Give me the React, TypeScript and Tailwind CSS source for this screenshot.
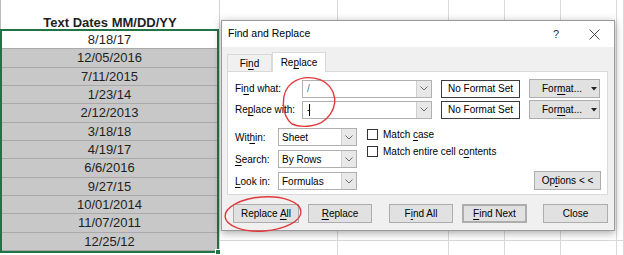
import React from "react";

const U = ({ children }: { children: React.ReactNode }) => (
  <span className="underline decoration-[0.5px] underline-offset-[1.5px]">{children}</span>
);

const Chev = () => (
  <svg width="8" height="5" viewBox="0 0 8 5">
    <path d="M0.5 0.5 L4 4 L7.5 0.5" fill="none" stroke="#6b6b6b" strokeWidth="1" />
  </svg>
);

function Combo({ className, text }: { className: string; text: React.ReactNode }) {
  return (
    <div className={`flex h-[18px] border border-[#b0b0b0] bg-white ${className}`}>
      <div className="flex flex-1 items-center pl-[3px] overflow-hidden whitespace-nowrap">{text}</div>
      <div className="flex w-[15px] items-center justify-center border-l border-[#cfcfcf] bg-[#e8e8e8]">
        <Chev />
      </div>
    </div>
  );
}

function Btn({ className, children }: { className: string; children: React.ReactNode }) {
  return (
    <div className={`flex h-[19px] items-center justify-center border border-[#adadad] bg-[#e1e1e1] ${className}`}>
      {children}
    </div>
  );
}

const dates = [
  "8/18/17",
  "12/05/2016",
  "7/11/2015",
  "1/23/14",
  "2/12/2013",
  "3/18/18",
  "4/19/17",
  "6/6/2016",
  "9/27/15",
  "10/01/2014",
  "11/07/2011",
  "12/25/12",
];

export default function App() {
  return (
    <div className="relative h-[255px] w-[624px] overflow-hidden bg-white" style={{ fontFamily: "'Liberation Sans', Arial, sans-serif" }}>
      {/* Sheet */}
      <div className="flex h-full">
        {/* Column A */}
        <div className="flex h-full w-[220px] flex-col border-r border-[#d4d4d4] text-[13px] text-[#1f1f1f]">
          <div className="h-[29px] border-l border-[#bdbdbd] pt-[17px] text-center font-bold leading-[12px]">Text Dates MM/DD/YY</div>
          <div className="relative border-2 border-[#217346]">
            {dates.map((d, i) => (
              <div
                key={d}
                className={`flex h-[18.33px] items-center justify-center border-b border-[#a9a9a9] last:border-b-0 ${i === 0 ? "bg-white" : "bg-[#c8c8c8]"}`}
              >
                {d}
              </div>
            ))}
            <div className="absolute bottom-[-4px] right-[-4px] h-[6px] w-[6px] border border-white bg-[#217346]" />
          </div>
        </div>
        {/* Other columns */}
        <div className="grid h-full flex-1 grid-cols-[118px_111px_56px_56px_56px_1fr] grid-rows-[241px_1fr]">
          {Array.from({ length: 12 }).map((_, i) => (
            <div key={i} className={`border-r border-[#d9d9d9] ${i < 6 ? "border-b" : ""}`} />
          ))}
        </div>
      </div>

      {/* Dialog */}
      <div className="absolute left-[221px] top-[20px] flex h-[211px] w-[394px] flex-col border border-[#9a9a9a] bg-[#f0f0f0] text-[10px] text-black shadow-[0_2px_8px_rgba(0,0,0,0.35)]">
        <div className="flex h-[26px] items-center bg-white pl-[6px]">
          <div className="flex-1 text-[10.5px]">Find and Replace</div>
          <div className="text-[11px] text-[#333]">?</div>
          <svg width="11" height="11" viewBox="0 0 11 11" className="ml-[30px] mr-[14px]">
            <path d="M0.5 0.5 L10.5 10.5 M10.5 0.5 L0.5 10.5" stroke="#333" strokeWidth="0.9" />
          </svg>
        </div>
        <div className="flex h-[24px] items-end pl-[5px]">
          <div className="flex h-[17px] w-[45px] items-center justify-center border border-b-0 border-[#d9d9d9] bg-[#f0f0f0]">
            <span>
              Fi<U>n</U>d
            </span>
          </div>
          <div className="relative z-10 -mb-px flex h-[20px] w-[54px] items-center justify-center border border-b-0 border-[#d9d9d9] bg-white">
            <span>
              Re<U>p</U>lace
            </span>
          </div>
        </div>
        <div className="ml-[5px] flex h-[124px] w-[381px] flex-col border border-[#d9d9d9] bg-white pl-[7px] pr-[6px] pt-[7px]">
          {[0, 1].map((r) => (
            <div key={r} className={`flex items-center ${r === 1 ? "mt-[2px]" : ""}`}>
              <div className="w-[67px]">
                {r === 0 ? (
                  <>
                    Fi<U>n</U>d what:
                  </>
                ) : (
                  <>
                    Re<U>p</U>lace with:
                  </>
                )}
              </div>
              <Combo
                className="w-[130px]"
                text={
                  r === 0 ? (
                    <span className="pl-[1px] text-[#5a6e8c]">/</span>
                  ) : (
                    <span className="flex items-center pl-[1px]">
                      -<span className="ml-[-1px] inline-block h-[12px] w-[1px] bg-black" />
                    </span>
                  )
                }
              />
              <div className="ml-[9px] flex h-[18px] w-[79px] items-center justify-center border border-[#3c3c3c] bg-white">No Format Set</div>
              <Btn className="ml-[9px] w-[71px] justify-end gap-[9px] pr-[2px]">
                <span>
                  For<U>m</U>at...
                </span>
                <svg width="6" height="4" viewBox="0 0 6 4">
                  <path d="M0 0 H6 L3 3.5 Z" fill="#222" />
                </svg>
              </Btn>
            </div>
          ))}
          <div className="mt-[9px] flex items-end">
            <div className="flex flex-col gap-[4px]">
              {[
                [
                  <>
                    Wit<U>h</U>in:
                  </>,
                  "Sheet",
                ],
                [
                  <>
                    <U>S</U>earch:
                  </>,
                  "By Rows",
                ],
                [
                  <>
                    <U>L</U>ook in:
                  </>,
                  "Formulas",
                ],
              ].map(([l, v], i) => (
                <div key={i} className="flex items-center">
                  <div className="w-[43px]">{l}</div>
                  <Combo className="w-[79px]" text={v} />
                </div>
              ))}
            </div>
            <div className="ml-[10px] flex flex-1 flex-col self-start -mt-[2px]">
              {[
                <>
                  Match <U>c</U>ase
                </>,
                <>
                  Match entire cell c<U>o</U>ntents
                </>,
              ].map((t, i) => (
                <div key={i} className="flex h-[17px] items-center">
                  <div className="h-[11px] w-[11px] border border-[#333] bg-white" />
                  <div className="ml-[5px]">{t}</div>
                </div>
              ))}
            </div>
            <Btn className="w-[67px]">
              <span>
                Op<U>t</U>ions &lt; &lt;
              </span>
            </Btn>
          </div>
        </div>
        <div className="mt-[9px] flex pl-[11px]">
          <Btn className="w-[66px]">
            <span>
              Replace <U>A</U>ll
            </span>
          </Btn>
          <Btn className="ml-[9px] w-[64px]">
            <span>
              <U>R</U>eplace
            </span>
          </Btn>
          <Btn className="ml-[17px] w-[64px]">
            <span>
              F<U>i</U>nd All
            </span>
          </Btn>
          <Btn className="ml-[9px] w-[65px] border-2 border-[#0078d7]">
            <span>
              <U>F</U>ind Next
            </span>
          </Btn>
          <Btn className="ml-[16px] w-[65px]">
            <span>Close</span>
          </Btn>
        </div>
      </div>

      {/* Red annotations */}
      <svg className="pointer-events-none absolute left-0 top-0" width="624" height="255" viewBox="0 0 624 255">
        <path
          d="M292 124 C281 115, 280 92, 292 83 C304 74, 326 76, 333 92 C339 107, 328 124, 310 126 C302 127, 296 126, 292 124"
          fill="none"
          stroke="#e3393c"
          strokeWidth="1.4"
        />
        <ellipse cx="263" cy="214" rx="38" ry="17" transform="rotate(-4 263 214)" fill="none" stroke="#e3393c" strokeWidth="1.4" />
      </svg>
    </div>
  );
}
